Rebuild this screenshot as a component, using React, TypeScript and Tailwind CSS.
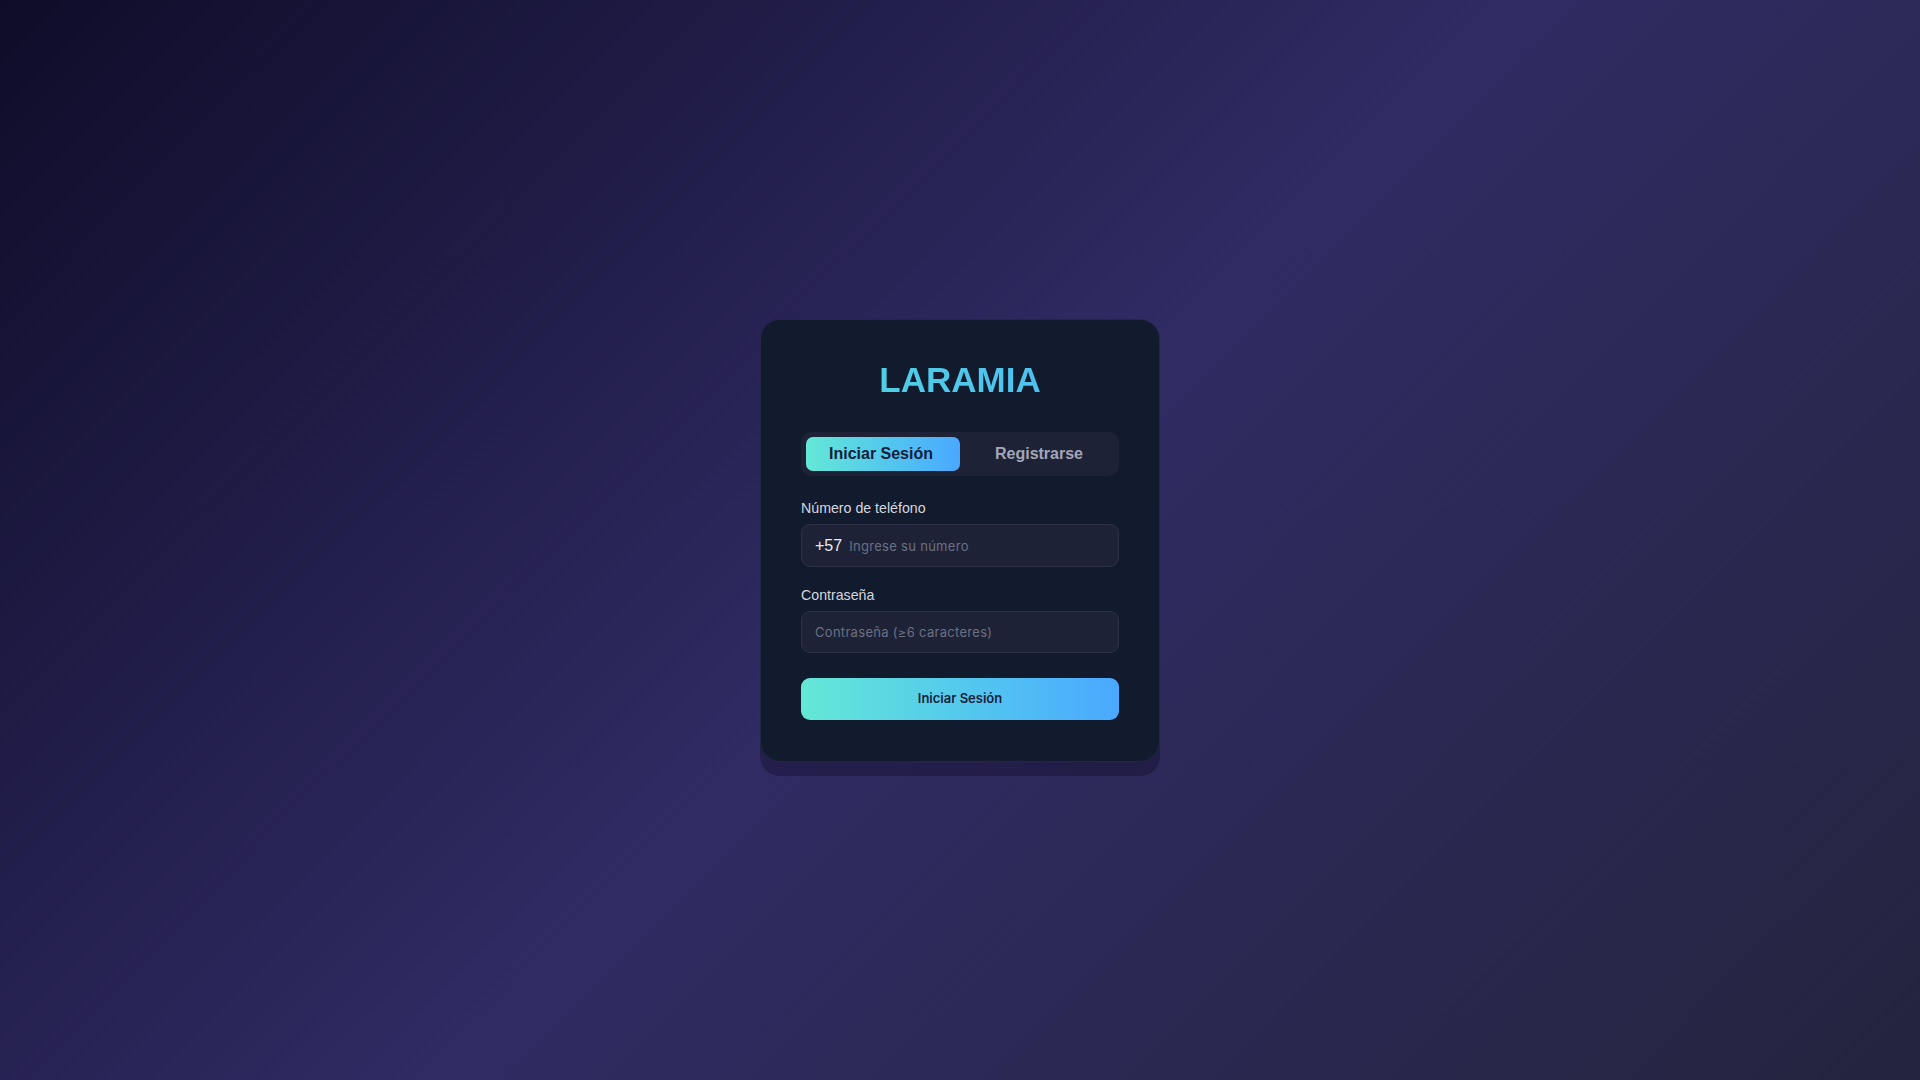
import React, { useState } from 'react';

// Pantalla de acceso de LARAMIA: pestañas de inicio de sesión / registro
export default function App() {
  const [tab, setTab] = useState<'login' | 'register'>('login');
  const [phone, setPhone] = useState('');
  const [password, setPassword] = useState('');

  const tabCls = (active: boolean) =>
    active
      ? 'flex-1 h-[34px] rounded-[7px] bg-gradient-to-r from-[#64e8d6] to-[#4aa8ff] text-[#15203a] text-[16px] font-bold pr-1'
      : 'flex-1 h-[34px] rounded-[7px] text-[#a3a6b8] text-[16px] font-bold pl-1';

  return (
    <div
      className="w-full h-screen flex items-center justify-center bg-[linear-gradient(135deg,#0f0c29_0%,#302b63_50%,#24243e_100%)]"
      style={{ fontFamily: '"Liberation Sans", Arial, sans-serif' }}
    >
      <div className="w-[400px] rounded-[20px] bg-[#121a2e] border border-[#222842] px-10 pt-[40px] pb-[41px] shadow-[0_14px_0_0_rgba(22,16,48,0.45)]">
        <h1 className="text-center text-[35px] leading-[40px] font-bold bg-gradient-to-r from-[#4fd6de] to-[#4fb8f4] bg-clip-text text-transparent">
          LARAMIA
        </h1>

        <div className="mt-8 flex p-[5px] rounded-[10px] bg-[#1e2236]">
          <button className={tabCls(tab === 'login')} onClick={() => setTab('login')}>
            Iniciar Sesión
          </button>
          <button className={tabCls(tab === 'register')} onClick={() => setTab('register')}>
            Registrarse
          </button>
        </div>

        <label className="block mt-[22px] text-[14.2px] leading-[20px] text-[#d4d6df]">Número de teléfono</label>
        <div className="mt-1.5 h-[43px] flex items-center rounded-[9px] border border-[#2c3147] bg-[#1e2236] px-[13px] pt-[2px]">
          <span className="text-[16px] text-[#e8eaf0] mr-[7px]">+57</span>
          <input
            value={phone}
            onChange={(e) => setPhone(e.target.value)}
            placeholder="Ingrese su número"
            className="flex-1 min-w-0 pt-[2px] bg-transparent outline-none text-[13px] text-[#e8eaf0] placeholder:text-[#6b7083] tracking-[0.3px]"
            style={{ fontFamily: 'Inter, "Noto Sans", sans-serif' }}
          />
        </div>

        <label className="block mt-[18px] text-[14.2px] leading-[20px] text-[#d4d6df]">Contraseña</label>
        <div className="mt-1.5 h-[42px] flex items-center rounded-[9px] border border-[#2c3147] bg-[#1e2236] px-[13px] pt-[2px]">
          <input
            type="password"
            value={password}
            onChange={(e) => setPassword(e.target.value)}
            placeholder="Contraseña (≥6 caracteres)"
            className="flex-1 min-w-0 bg-transparent outline-none text-[13px] text-[#e8eaf0] placeholder:text-[#6b7083] tracking-[0.3px]"
            style={{ fontFamily: 'Inter, "Noto Sans", sans-serif' }}
          />
        </div>

        <button
          className="mt-[25px] w-full h-[42px] rounded-[9px] bg-gradient-to-r from-[#64e8d6] to-[#4aa8ff] text-[13px] font-semibold text-[#15203a]"
          style={{ fontFamily: 'Inter, "Noto Sans", sans-serif' }}
        >
          Iniciar Sesión
        </button>
      </div>
    </div>
  );
}
